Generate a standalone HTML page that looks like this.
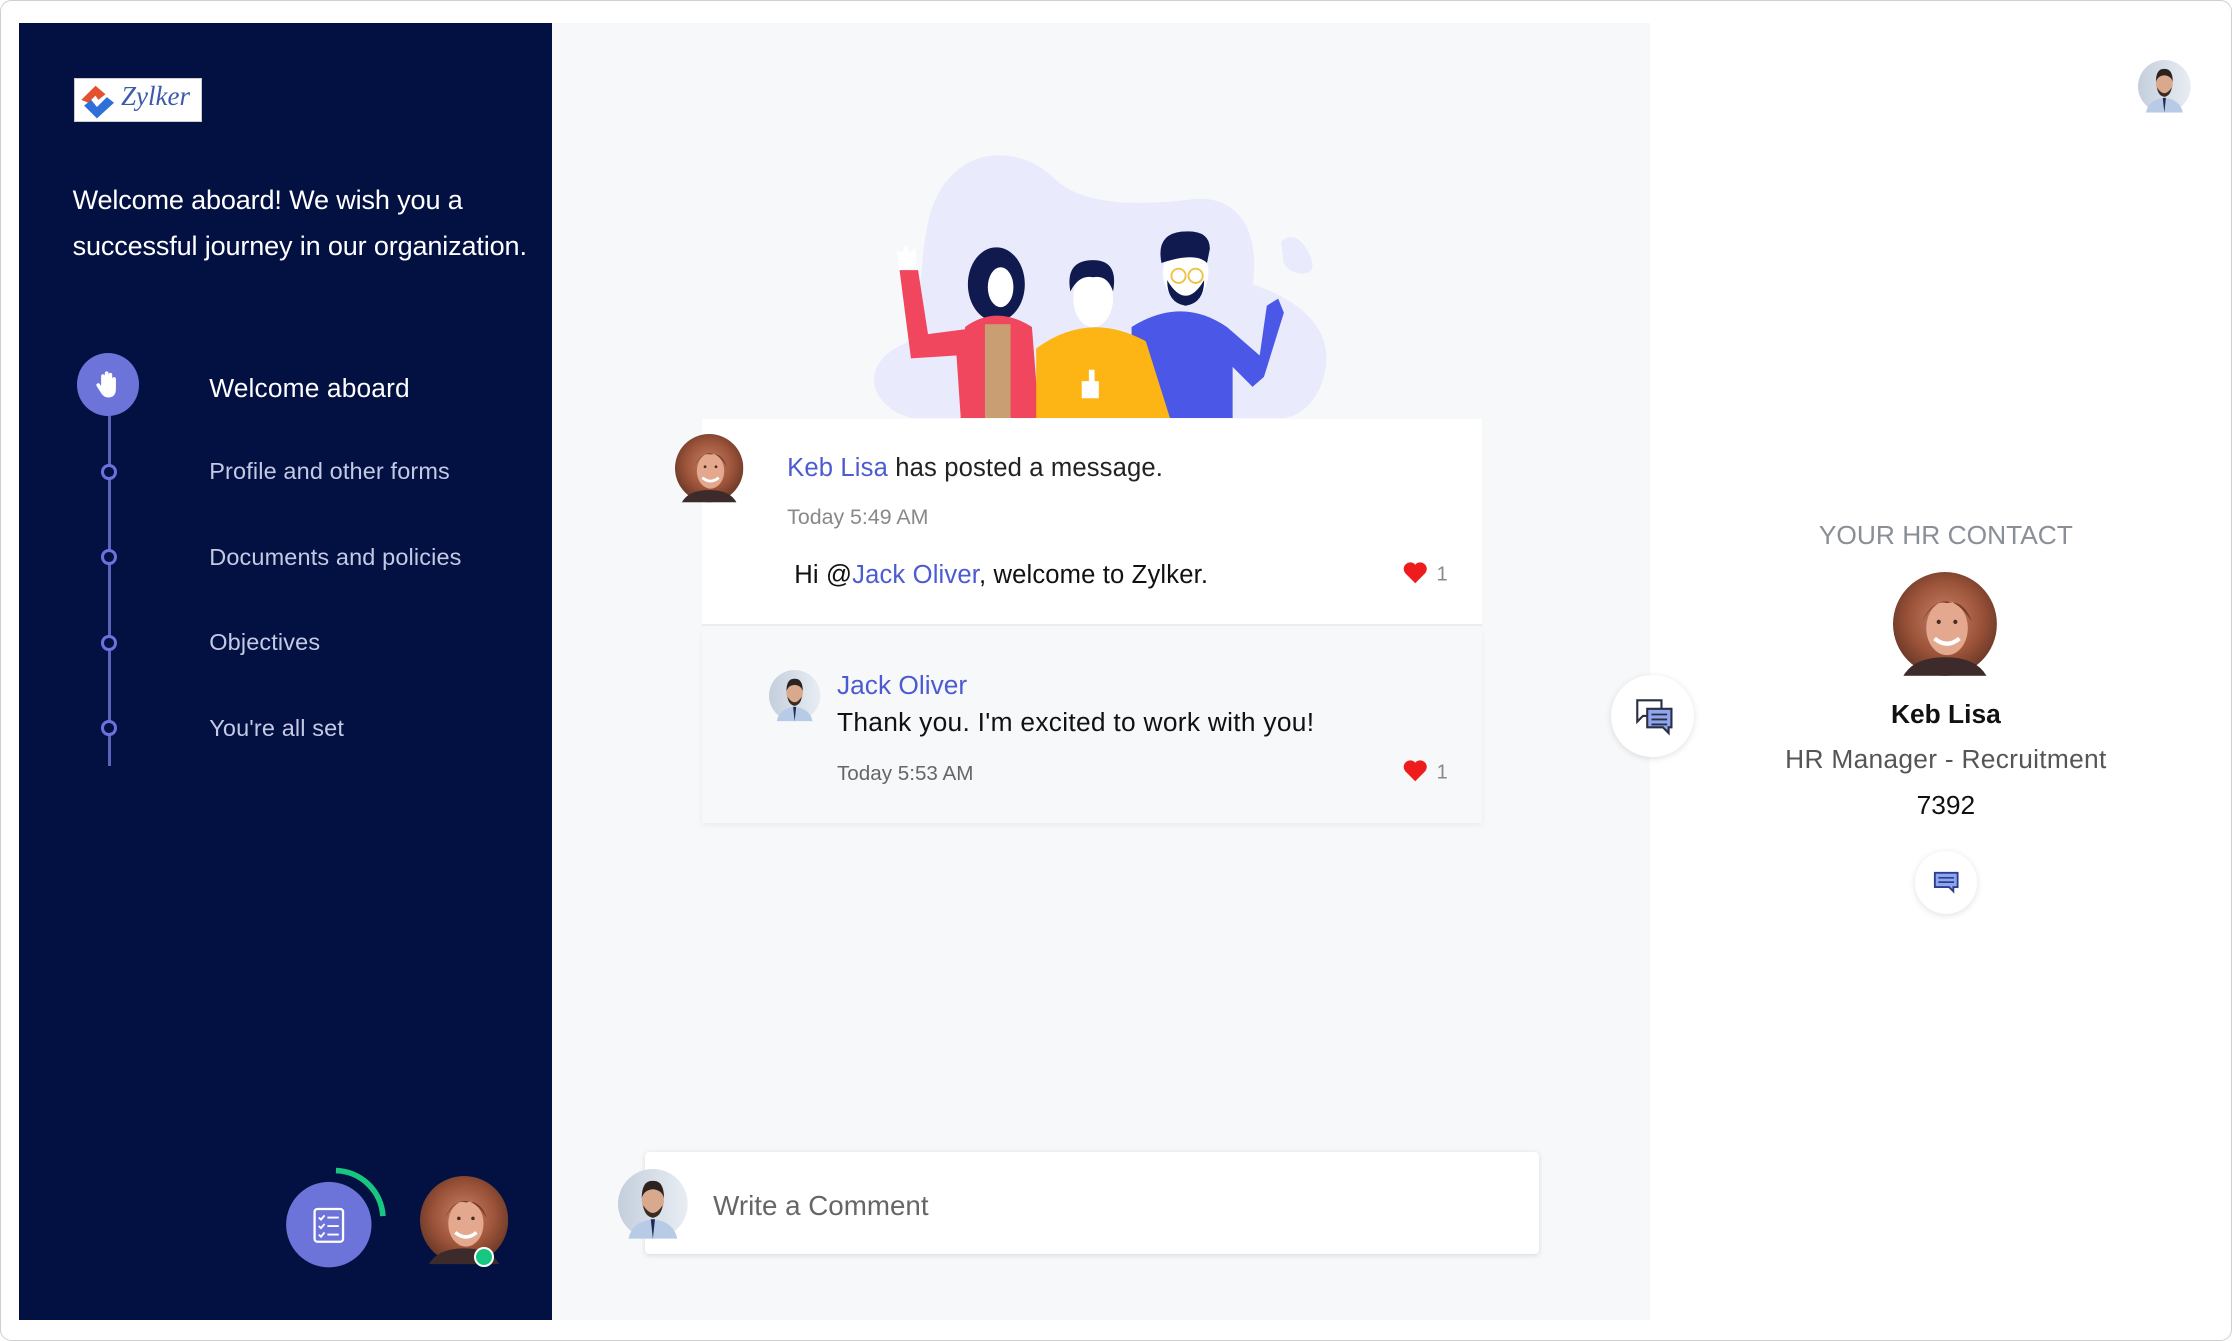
<!DOCTYPE html>
<html><head><meta charset="utf-8">
<style>
html{zoom:1.42347;}
*{box-sizing:border-box;margin:0;padding:0}
body{width:1568px;height:942px;position:relative;overflow:hidden;background:#fff;font-family:"Liberation Sans",sans-serif;}
.frame{position:absolute;left:0;top:0;width:1568px;height:942px;border:1px solid #cfcfcf;border-radius:8px;}
.side{position:absolute;left:13px;top:16px;width:375px;height:911px;background:#031042;}
.center{position:absolute;left:388px;top:16px;width:771px;height:911px;background:#f7f8fa;}
.abs{position:absolute}
.navtxt{position:absolute;left:147px;color:#c4c9e4;font-size:16.5px;letter-spacing:0.1px}
.dot{position:absolute;left:71px;width:11px;height:11px;border:2.5px solid #6b72de;border-radius:50%;background:#031042}
.card{position:absolute;left:493px;top:294px;width:548px;height:146px;background:#fff;border-bottom:2px solid #ececf0}
.reply{position:absolute;left:493px;top:442px;width:548px;height:136px;background:#f7f8fa;box-shadow:0 2px 4px rgba(0,0,0,.05)}
.blue{color:#4d5bd1}
</style></head><body>
<div class="frame"></div>
<div class="side">
  <div class="abs" style="left:39px;top:39px;width:90px;height:31px;background:#fff;border:1px solid #ccc"></div>
  <svg class="abs" style="left:41px;top:40px" width="30" height="30" viewBox="0 0 30 30">
    <path d="M3 14 L13 4 L20 10 L15 14 L13 11 L8 16Z" fill="#e4512f"/>
    <path d="M5 18 L10 14 L14 19 L21 12 L26 16 L14 27Z" fill="#2f6fd8"/>
  </svg>
  <div class="abs" style="left:72px;top:41px;font-family:'Liberation Serif',serif;font-style:italic;font-size:19px;color:#3b5aa9">Zylker</div>
  <div class="abs" style="left:38px;top:108px;width:345px;color:#fff;font-size:19px;line-height:33px;letter-spacing:-0.1px">Welcome aboard! We wish you a successful journey in our organization.</div>
  <div class="abs" style="left:63px;top:276px;width:2px;height:246px;background:#5a64b8"></div>
  <div class="abs" style="left:41px;top:232px;width:44px;height:44px;border-radius:50%;background:#6c74d9"></div>
  <svg class="abs" style="left:53px;top:243px" width="20" height="22" viewBox="0 0 20 22"><path d="M5 12 V5 a1.3 1.3 0 0 1 2.6 0 V10 V3 a1.3 1.3 0 0 1 2.6 0 V10 V4 a1.3 1.3 0 0 1 2.6 0 V11 V7 a1.3 1.3 0 0 1 2.6 0 V14 c0 4 -2 6 -5 6 c-3 0 -4 -1 -6 -4 l-2.5 -4 a1.3 1.3 0 0 1 2.2 -1.4Z" fill="#fff"/></svg>
  <div class="abs" style="left:134px;top:246px;color:#fff;font-size:18.5px;letter-spacing:0.1px">Welcome aboard</div>
</div>
<div class="dot" style="top:326px"></div><div class="navtxt" style="top:322px">Profile and other forms</div>
<div class="dot" style="top:386px"></div><div class="navtxt" style="top:382px">Documents and policies</div>
<div class="dot" style="top:446px"></div><div class="navtxt" style="top:442px">Objectives</div>
<div class="dot" style="top:506px"></div><div class="navtxt" style="top:502px">You're all set</div>

<svg class="abs" style="left:196px;top:816px" width="80" height="80" viewBox="0 0 80 80">
  <path d="M40 6 A34 34 0 0 1 73 38" stroke="#17c77f" stroke-width="4" fill="none"/>
  <circle cx="35" cy="44" r="30" fill="#6c74d9"/>
  <rect x="25" y="33" width="20" height="23" rx="2" fill="none" stroke="#fff" stroke-width="1.6"/>
  <path d="M28 39 l1.5 1.5 l2.5 -3 M28 45 l1.5 1.5 l2.5 -3 M28 51 l1.5 1.5 l2.5 -3 M34 39 h8 M34 45 h8 M34 51 h8" stroke="#fff" stroke-width="1.3" fill="none"/>
</svg>

<svg width="0" height="0" style="position:absolute">
<defs>
<radialGradient id="wbg" cx="50%" cy="45%" r="60%"><stop offset="0" stop-color="#c98468"/><stop offset="0.6" stop-color="#9a5238"/><stop offset="1" stop-color="#5e3224"/></radialGradient>
<linearGradient id="mbg" x1="0" y1="0" x2="1" y2="0"><stop offset="0" stop-color="#c4cfdc"/><stop offset="1" stop-color="#e8edf3"/></linearGradient>
<symbol id="woman" viewBox="0 0 100 100"><circle cx="50" cy="50" r="50" fill="url(#wbg)"/><ellipse cx="52" cy="54" rx="20" ry="26" fill="#e3a88e"/><path d="M40 64 q12 10 24 0" stroke="#fff" stroke-width="4" fill="none"/><circle cx="44" cy="48" r="2" fill="#4a2a20"/><circle cx="60" cy="48" r="2" fill="#4a2a20"/><path d="M28 48 q22 -40 48 0 q-8 -22 -24 -18 q-14 -4 -24 18Z" fill="#7d3b28"/><path d="M10 100 q10 -18 40 -18 q30 0 40 18Z" fill="#3d2a2a"/></symbol>
<symbol id="man" viewBox="0 0 100 100"><circle cx="50" cy="50" r="50" fill="url(#mbg)"/><path d="M15 100 q5 -25 35 -28 q30 3 35 28Z" fill="#b7cbe6"/><path d="M47 72 l3 28 l3 -28Z" fill="#1c2a55"/><ellipse cx="50" cy="45" rx="16" ry="21" fill="#d8a98c"/><path d="M34 42 q0 -26 16 -25 q16 -1 16 25 q-3 -12 -16 -13 q-13 1 -16 13Z" fill="#2c2320"/><path d="M36 52 q14 22 28 0 q-2 16 -14 18 q-12 -2 -14 -18Z" fill="#3a2c25"/></symbol>
</defs></svg>

<svg class="abs" style="left:295px;top:826px" width="64" height="64"><use href="#woman" width="62" height="62"/></svg>
<div class="abs" style="left:333px;top:876px;width:14px;height:14px;border-radius:50%;background:#17c77f;border:2px solid #fff"></div>

<div class="center"></div>

<svg class="abs" style="left:600px;top:100px" width="340" height="194" viewBox="0 0 340 194">
  <path d="M30 190 C5 175 10 150 40 140 C50 105 45 60 60 35 C80 0 120 5 140 25 C160 45 200 45 240 40 C275 38 285 70 280 100 C310 110 340 130 330 165 C325 185 310 194 300 194 L40 194Z" fill="#e9ebfc"/>
  <path d="M300 70 c10 -10 20 5 22 15 c2 10 -15 10 -20 0Z" fill="#e9ebfc"/>
  <ellipse cx="28" cy="158" rx="8" ry="5" fill="#e9ebfc"/>
  <path d="M32 90 L45 90 L52 135 L90 130 L100 194 L75 194 L72 150 L40 152Z" fill="#f0475f"/>
  <path d="M32 90 l-2 -14 l4 2 l2 -6 l3 6 l4 -4 l1 14Z" fill="#fff"/>
  <ellipse cx="100" cy="100" rx="20" ry="26" fill="#101a4f"/>
  <ellipse cx="103" cy="102" rx="9" ry="14" fill="#fff"/>
  <path d="M78 130 Q100 114 125 130 L130 194 L75 194Z" fill="#f0475f"/>
  <rect x="92" y="128" width="18" height="66" fill="#c99e73"/>
  <path d="M195 130 Q230 108 262 130 L285 150 L290 115 L298 110 L302 120 L288 165 L280 172 L266 158 L266 194 L195 194Z" fill="#4b57e6"/>
  <ellipse cx="233" cy="92" rx="16" ry="20" fill="#fff"/>
  <path d="M216 85 q-4 -20 14 -22 q20 -2 20 12 l-2 10 q-8 -8 -32 0Z" fill="#101a4f"/>
  <path d="M220 97 q13 22 26 0 q0 16 -13 18 q-13 -2 -13 -18Z" fill="#101a4f"/>
  <circle cx="228" cy="94" r="5" fill="none" stroke="#f0c040" stroke-width="1.3"/><circle cx="240" cy="94" r="5" fill="none" stroke="#f0c040" stroke-width="1.3"/>
  <path d="M128 145 Q165 118 205 140 L222 194 L128 194Z" fill="#fdb515"/>
  <ellipse cx="168" cy="110" rx="14" ry="20" fill="#fff"/>
  <path d="M152 105 q-4 -22 16 -22 q18 0 14 22 q-4 -12 -14 -10 q-10 -2 -16 10Z" fill="#101a4f"/>
  <path d="M160 168 h12 v12 h-12Z M165 160 h4 v8 h-4Z" fill="#fff"/>
</svg>

<div class="card">
  <div class="abs" style="left:60px;top:25px;font-size:18px;color:#222;letter-spacing:0.1px"><span class="blue">Keb Lisa</span> has posted a message.</div>
  <div class="abs" style="left:60px;top:61px;font-size:15px;color:#888">Today 5:49 AM</div>
  <div class="abs" style="left:65px;top:100px;font-size:18px;color:#111;letter-spacing:0.1px">Hi @<span class="blue">Jack Oliver</span>, welcome to Zylker.</div>
</div>
<svg class="abs" style="left:474px;top:305px" width="50" height="50"><use href="#woman" width="48" height="48"/></svg>
<div class="reply">
  <div class="abs" style="left:95px;top:29px;font-size:18.5px"><span class="blue">Jack Oliver</span></div>
  <div class="abs" style="left:95px;top:55px;font-size:18.5px;color:#111;letter-spacing:0.2px">Thank you. I'm excited to work with you!</div>
  <div class="abs" style="left:95px;top:93px;font-size:14.5px;color:#666">Today 5:53 AM</div>
</div>
<svg class="abs" style="left:540px;top:471px" width="38" height="38"><use href="#man" width="36" height="36"/></svg>
<svg class="abs" style="left:984px;top:393px" width="40" height="20"><path d="M10 17 L3 10 A4 4 0 0 1 10 4 A4 4 0 0 1 17 10Z" fill="#ee1c1c"/><text x="25" y="15" font-size="14" fill="#888" font-family="Liberation Sans">1</text></svg>
<svg class="abs" style="left:984px;top:532px" width="40" height="20"><path d="M10 17 L3 10 A4 4 0 0 1 10 4 A4 4 0 0 1 17 10Z" fill="#ee1c1c"/><text x="25" y="15" font-size="14" fill="#888" font-family="Liberation Sans">1</text></svg>

<div class="abs" style="left:1132px;top:474px;width:58px;height:58px;border-radius:50%;background:#fff;box-shadow:0 1px 5px rgba(0,0,0,.12)"></div>
<svg class="abs" style="left:1147px;top:489px" width="30" height="28" viewBox="0 0 30 28">
  <path d="M3 3 h17 v11 h-13 l-4 4Z" fill="#fff" stroke="#2a2f45" stroke-width="1.5"/>
  <path d="M10 9 h17 v13 h-2 v4 l-4 -4 h-11Z" fill="#8fa6ee" stroke="#2a2f45" stroke-width="1.5"/>
  <path d="M13 13 h11 M13 16.5 h11 M13 20 h11" stroke="#2a2f45" stroke-width="1.3"/>
</svg>

<div class="abs" style="left:453px;top:809px;width:628px;height:72px;background:#fff;border-radius:3px;box-shadow:0 1px 4px rgba(0,0,0,.12)"></div>
<svg class="abs" style="left:434px;top:821px" width="50" height="50"><use href="#man" width="49" height="49"/></svg>
<div class="abs" style="left:501px;top:836px;font-size:19.5px;color:#666">Write a Comment</div>

<svg class="abs" style="left:1502px;top:42px" width="38" height="38"><use href="#man" width="37" height="37"/></svg>
<div class="abs" style="left:1160px;top:365px;width:414px;text-align:center;font-size:18.5px;color:#8a8e96">YOUR HR CONTACT</div>
<svg class="abs" style="left:1330px;top:402px" width="74" height="74"><use href="#woman" width="73" height="73"/></svg>
<div class="abs" style="left:1160px;top:491px;width:414px;text-align:center;font-size:18.5px;font-weight:bold;color:#111">Keb Lisa</div>
<div class="abs" style="left:1160px;top:523px;width:414px;text-align:center;font-size:18.5px;color:#555;letter-spacing:0.2px">HR Manager - Recruitment</div>
<div class="abs" style="left:1160px;top:555px;width:414px;text-align:center;font-size:18.5px;color:#111">7392</div>
<div class="abs" style="left:1345px;top:598px;width:44px;height:44px;border-radius:50%;background:#fff;box-shadow:0 1px 5px rgba(0,0,0,.12)"></div>
<svg class="abs" style="left:1357px;top:611px" width="20" height="18" viewBox="0 0 20 18"><path d="M2 2 h16 v10 h-3 v3 l-3 -3 h-10Z" fill="#8fa6ee" stroke="#2a3f90" stroke-width="1.3"/><path d="M4.5 5.5 h11 M4.5 8.5 h11" stroke="#2a3f90" stroke-width="1.2"/></svg>
</body></html>
